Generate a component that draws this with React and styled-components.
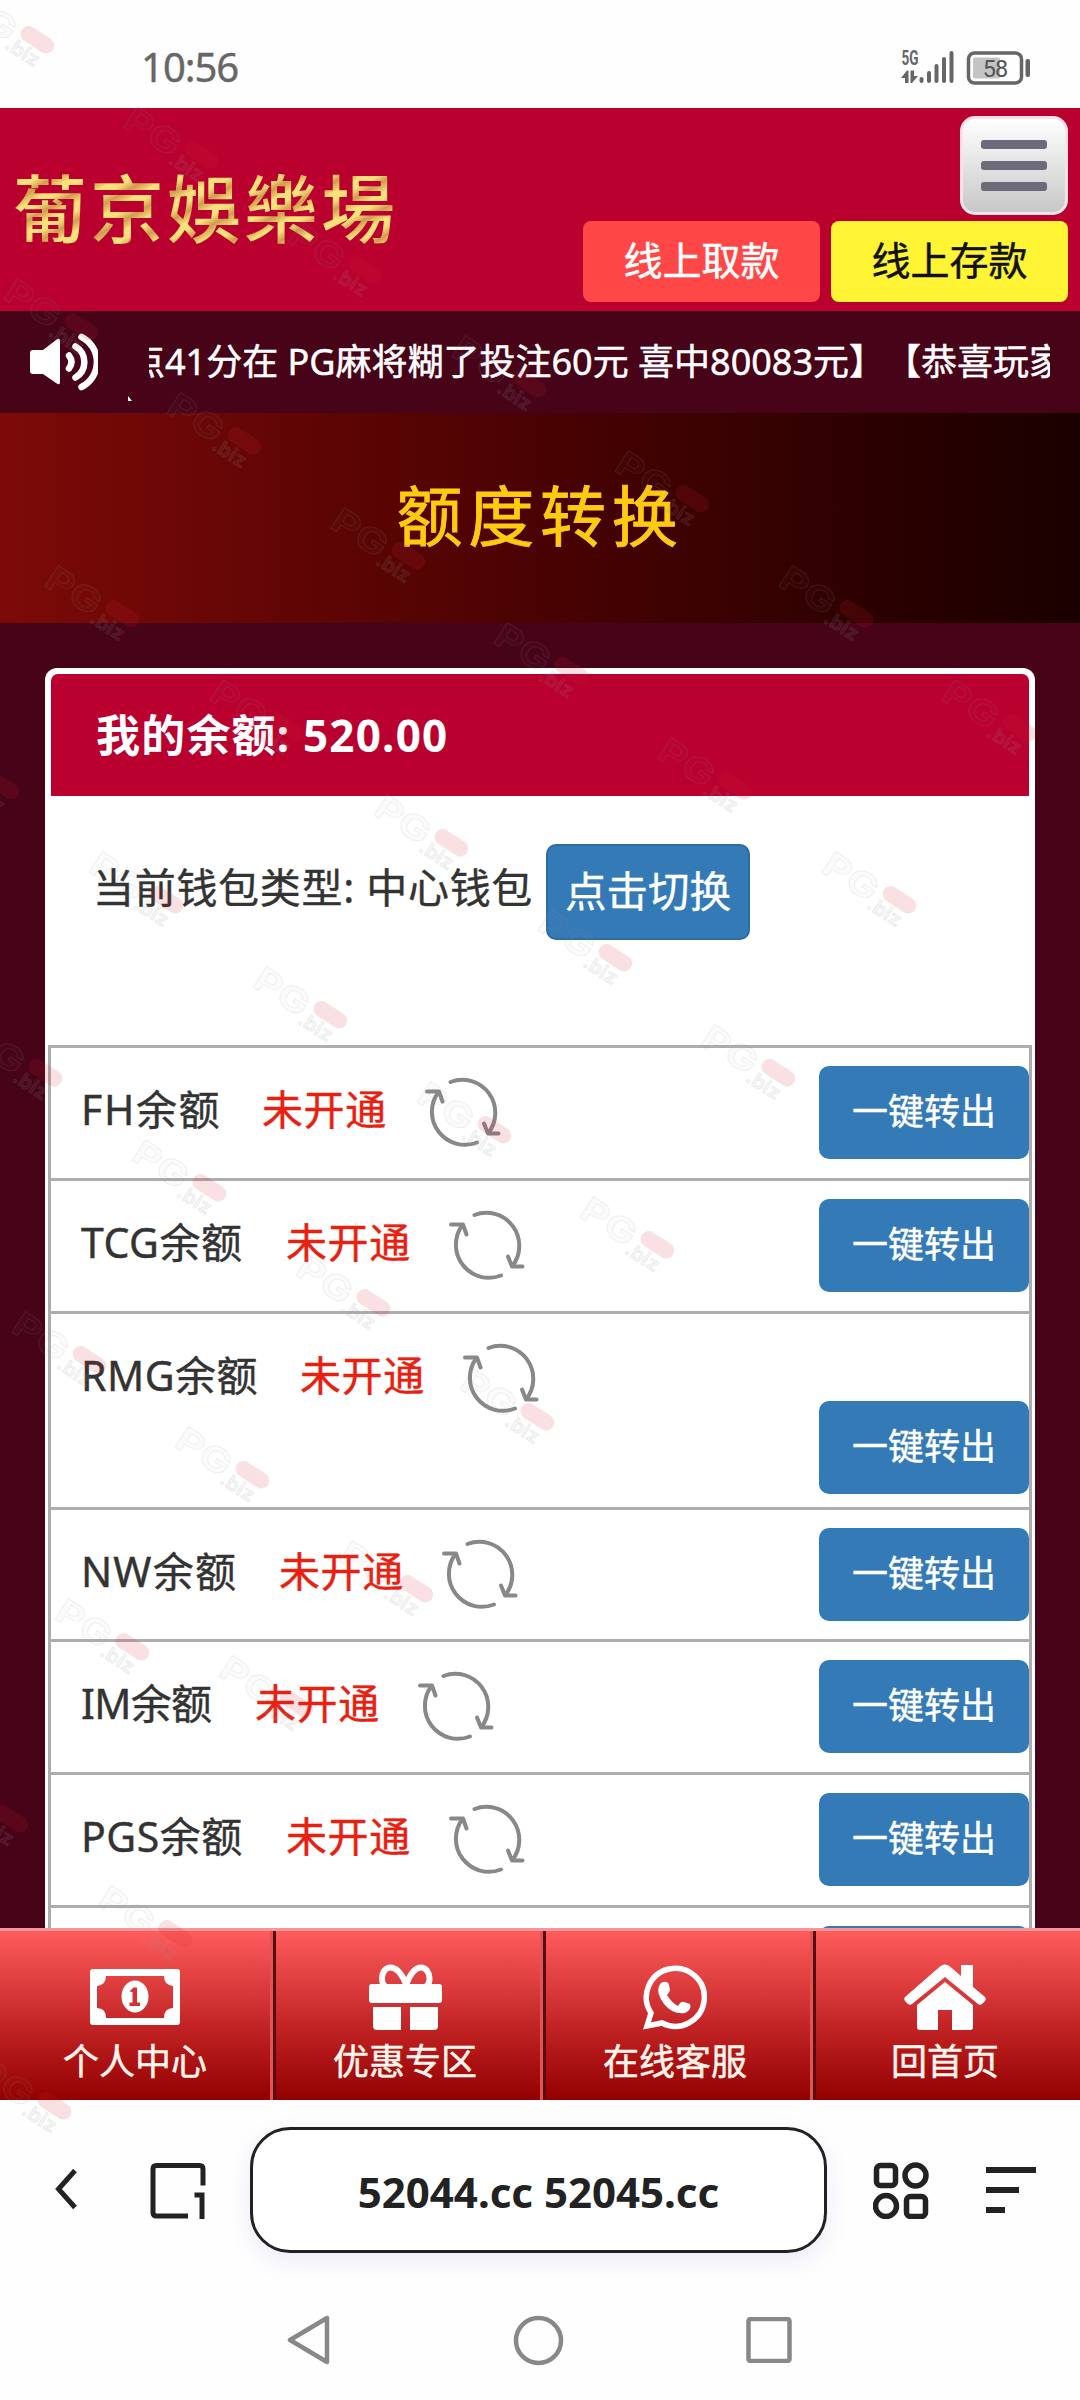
// App.jsx
import React from 'react';
import styled, { createGlobalStyle } from 'styled-components';

const COLORS = {
  brand: '#b9002f',
  dark: '#470318',
  blue: '#337ab7',
  line: '#adadad',
  ink: '#222',
};

const FONT = `'Noto Sans', 'Noto Sans CJK SC', sans-serif`;

const GlobalStyle = createGlobalStyle`
  body {
    margin: 0;
    background: #fefefe;
    font-family: ${FONT};
  }
  * { box-sizing: border-box; }
`;

const Screen = styled.div`
  position: relative;
  width: 1080px;
  height: 2400px;
  overflow: hidden;
  display: flex;
  flex-direction: column;
  background: #fefefe;
`;

const StatusBar = styled.div`
  height: 108px;
  padding: 26px 49px 0 141px;
  display: flex;
  justify-content: space-between;
  align-items: center;
  flex-shrink: 0;
`;

const Clock = styled.span`
  font-size: 40px;
  line-height: 50px;
  letter-spacing: -1px;
  color: #666;
  -webkit-text-stroke: 0.4px;
`;

const Header = styled.header`
  height: 203px;
  padding: 8px 12px 9px 13px;
  display: flex;
  justify-content: space-between;
  background: ${COLORS.brand};
  flex-shrink: 0;
`;

const Logo = styled.h1`
  margin: 39px 0 0;
  height: 100px;
  font-family: 'Noto Sans CJK TC', sans-serif;
  font-size: 74px;
  font-weight: 500;
  line-height: 100px;
  letter-spacing: 3px;
  white-space: nowrap;
  color: transparent;
  background: repeating-linear-gradient(150deg, #f8e07a 0 8px, #cf9c50 16px, #f3d470 24px);
  -webkit-background-clip: text;
  background-clip: text;
`;

const HeaderActions = styled.div`
  display: flex;
  flex-direction: column;
  align-items: flex-end;
  justify-content: space-between;
`;

const MenuButton = styled.button`
  width: 108px;
  height: 99px;
  padding: 0;
  border: 3px solid #f5e3e8;
  border-radius: 15px;
  background: linear-gradient(#fff, #c8c8c8);
  display: flex;
  flex-direction: column;
  align-items: center;
  justify-content: center;
  gap: 12px;
`;

const MenuLine = styled.span`
  width: 66px;
  height: 9px;
  border-radius: 3px;
  background: #6b6b7b;
`;

const PayRow = styled.div`
  display: flex;
  gap: 11px;
`;

const PayButton = styled.button`
  width: 237px;
  height: 81px;
  padding: 0 0 7px;
  border: 0;
  border-radius: 8px;
  font: 39px ${FONT};
  color: ${p => p.$color};
  background: ${p => p.$bg};
  -webkit-text-stroke: 0.5px;
`;

const Notice = styled.div`
  position: relative;
  height: 102px;
  padding: 0 30px;
  display: flex;
  align-items: center;
  background: ${COLORS.dark};
  flex-shrink: 0;
`;

const Marquee = styled.div`
  width: 901px;
  margin-left: 51px;
  overflow: hidden;
`;

const MarqueeText = styled.div`
  margin-left: -20px;
  font-size: 36px;
  line-height: 56px;
  white-space: pre;
  text-spacing-trim: space-all;
  color: #fff;
  -webkit-text-stroke: 0.5px;
`;

const MarqueeTail = styled.i`
  position: absolute;
  left: 128px;
  top: 85px;
  width: 4px;
  height: 5px;
  background: #fff;
  clip-path: polygon(0 0, 100% 100%, 0 100%);
`;

const Content = styled.main`
  height: 1515px;
  overflow: hidden;
  background: ${COLORS.dark};
  flex-shrink: 0;
`;

const Banner = styled.h2`
  margin: 0;
  height: 210px;
  display: flex;
  align-items: center;
  justify-content: center;
  padding-bottom: 13px;
  font-size: 66px;
  font-weight: 400;
  letter-spacing: 5.7px;
  color: #ffcb12;
  background: linear-gradient(90deg, #7c0a08, #4a0202 50%, #1a0000);
  -webkit-text-stroke: 0.8px;
`;

const Card = styled.section`
  margin: 45px 45px 0;
  border-radius: 12px 12px 0 0;
  background: #fff;
  padding: 6px 3px 0;
`;

const CardTitle = styled.div`
  margin: 0 3px;
  height: 122px;
  padding-left: 45px;
  border-radius: 7px 7px 0 0;
  font-size: 44px;
  font-weight: 700;
  line-height: 122px;
  letter-spacing: 1.2px;
  color: #fff;
  background: ${COLORS.brand};
`;

const WalletLine = styled.div`
  height: 249px;
  padding: 48px 0 0 45px;
  display: flex;
  align-items: flex-start;
  font-size: 41px;
  line-height: 87px;
  white-space: nowrap;
  color: #333;
  -webkit-text-stroke: 0.4px;
`;

const WalletType = styled.span`
  width: 453px;
  letter-spacing: 0.7px;
`;

const SwitchButton = styled.button`
  width: 204px;
  height: 96px;
  padding: 0 0 6px;
  border: 2px solid #2e6da4;
  border-radius: 10px;
  font: 41.5px ${FONT};
  color: #fff;
  background: ${COLORS.blue};
  -webkit-text-stroke: 0.4px;
`;

const Table = styled.div`
  border: solid ${COLORS.line};
  border-width: 0 3px;
`;

const Row = styled.div`
  height: ${p => p.$height}px;
  border-top: 3px solid ${COLORS.line};
  padding: 18px 0 ${p => (p.$wrapped ? 13 : 18)}px 30px;
  display: flex;
  justify-content: space-between;
  align-items: ${p => (p.$wrapped ? 'flex-end' : 'flex-start')};
`;

const Balance = styled.div`
  align-self: flex-start;
  display: flex;
  align-items: center;
  height: 93px;
  font-size: 41px;
  line-height: 60px;
  white-space: nowrap;
  color: #333;
  -webkit-text-stroke: 0.4px;
`;

const Platform = styled.span`
  width: ${p => p.$width}px;
  letter-spacing: ${p => p.$spacing || 0.5}px;
  padding-bottom: 8px;
`;

const State = styled.span`
  width: 162px;
  padding-bottom: 8px;
  letter-spacing: 0.6px;
  color: #e8200f;
`;

const TransferButton = styled.button`
  width: 210px;
  height: 93px;
  padding: 0 0 6px;
  border: 0;
  border-radius: 10px;
  font: 36px ${FONT};
  color: #fff;
  background: ${COLORS.blue};
  -webkit-text-stroke: 0.4px;
`;

const TabBar = styled.nav`
  height: 172px;
  display: grid;
  grid-template-columns: repeat(4, 1fr);
  border-top: 3px solid #f2979b;
  background: linear-gradient(#ff5c5c, #c02223 58%, #930000);
  flex-shrink: 0;
`;

const Tab = styled.a`
  display: flex;
  flex-direction: column;
  align-items: center;
  padding-top: 33px;
  font-size: 36px;
  line-height: 50px;
  color: #fff5ec;
  -webkit-text-stroke: 0.5px;
  & + & {
    box-shadow: inset 3px 0 #e25353, inset 6px 0 #5a0d10;
  }
  svg {
    display: block;
    margin-bottom: 7px;
  }
`;

const BrowserBar = styled.div`
  height: 180px;
  padding-left: 54px;
  display: flex;
  align-items: center;
  flex-shrink: 0;
`;

const AddressBox = styled.div`
  width: 577px;
  height: 126px;
  margin: 0 46px 0 44px;
  border: 3px solid ${COLORS.ink};
  border-radius: 40px;
  background: #fff;
  box-shadow: 0 8px 22px rgba(120, 120, 220, 0.14);
  font-size: 42px;
  font-weight: 700;
  line-height: 123px;
  text-align: center;
  white-space: nowrap;
  color: ${COLORS.ink};
`;

const SystemNav = styled.div`
  height: 120px;
  padding: 0 288px 0 286px;
  display: flex;
  align-items: center;
  justify-content: space-between;
`;

const StampLayer = styled.svg`
  position: absolute;
  inset: 0;
  pointer-events: none;
`;

const SignalIcon = () => (
  <svg width="130" height="34" viewBox="0 0 130 34" fill="#666" overflow="visible">
    <text x="0.500" y="15" fontSize="20" fontWeight="700" textLength="17" lengthAdjust="spacingAndGlyphs" fontFamily="Roboto">5G</text>
    <path d="M0 28l6-7.500h1.500V33H4v-5zM9.500 20.500H13V26h4l-6 7H9.500z" />
    <g stroke="#666" strokeWidth="4" strokeLinecap="round">
      <path d="M20.500 29v2M28 23v8M35.500 16v15M43 9v22M50.500 3v28" />
    </g>
    <rect x="67.500" y="3" width="53" height="30" rx="6" fill="none" stroke="#666" strokeWidth="3.500" />
    <rect x="72" y="7.500" width="27" height="21" rx="2" fill="#c4c4c4" />
    <text x="94" y="26.500" fontSize="23.500" textAnchor="middle" letterSpacing="-1" fontFamily="Roboto" fill="#555">58</text>
    <rect x="124.500" y="9" width="4.500" height="18" rx="2" />
  </svg>
);

const SpeakerIcon = () => (
  <svg width="68" height="58" viewBox="0 0 68 58" fill="#fff">
    <path d="M0 20q0-3 3-3h10L26 7q4-3 4 1v41q0 4-4 1L13 41H3q-3 0-3-3z" />
    <g fill="none" stroke="#fff" strokeWidth="6.500" strokeLinecap="round">
      <path d="M39 22.500q5 6.500 0 13M45.500 13.500a18 18 0 0 1 0 31M51.500 4a28 28 0 0 1 0 50" />
    </g>
  </svg>
);

const RefreshIcon = () => (
  <svg width="78" height="72" viewBox="0 0 78 72" fill="none" stroke="#888" strokeWidth="4" strokeLinecap="round" strokeLinejoin="round">
    <path d="M26.500 5A33 33 0 0 1 64 56.500M3 14.500h12l3.500 10M74.500 56.500H64l-4-10" />
    <path d="M14.500 15A33 33 0 0 0 53 65.500" />
  </svg>
);

const MoneyIcon = () => (
  <svg width="90" height="66" viewBox="0 0 90 66">
    <path fillRule="evenodd" fill="#fff" d="M3 5h84q3 0 3 3v50q0 3-3 3H3q-3 0-3-3V8q0-3 3-3zM16 12q0 9-9 10v22q9 0 9 10h58q0-10 9-10V22q-9-1-9-10z" />
    <ellipse cx="45" cy="32.500" rx="13.500" ry="16" fill="#fff" />
    <path d="M39.500 27.500l4-4H47v15h3V42H39.500v-3.500h3V28z" fill="#d23334" />
  </svg>
);

const GiftIcon = () => (
  <svg width="73" height="66" viewBox="0 0 73 66" fill="#fff">
    <path d="M37 20C32 8 27 3.500 21.500 3.500S13 9 13 14s1 6 3 8M37.500 20C42 8 47 3.500 52 3.500S60.500 9 60.500 14s-1 6-3 8" fill="none" stroke="#fff" strokeWidth="6" />
    <rect x="0" y="20" width="73" height="19" rx="3" />
    <path d="M4 43h28v23H8q-4 0-4-4zM41 43h28v19q0 4-4 4H41z" />
  </svg>
);

const ServiceIcon = () => (
  <svg width="64" height="66" viewBox="0 0 64 66">
    <path d="M8 49A29 29 0 1 1 19 59L4 62z" fill="none" stroke="#fff" strokeWidth="5.500" />
    <path d="M20 18q5-1 6 3l1 5q0 2-3 5 5 8 11 11 3-5 6-4l6 2q2 6-5 9-12 2-21-9-8-11-5-18 1-3 4-4z" fill="#fff" />
  </svg>
);

const HomeIcon = () => (
  <svg width="82" height="66" viewBox="0 0 82 66" fill="#fff">
    <path d="M36 2.500q5-4 10 0L57 12V1h12v22l12 10q1.500 2 0 4l-3 3q-2 1.500-4 0L41 13 8 40q-2 1.500-4 0l-3-3q-1.500-2 0-4z" />
    <path d="M41 18l28 23v22q0 3-3 3H48V46H34v20H16q-3 0-3-3V41z" />
  </svg>
);

const BackIcon = () => (
  <svg width="26" height="42" viewBox="0 0 26 42" fill="none" stroke={COLORS.ink} strokeWidth="5">
    <path d="M21 1.500L4.500 20 21 38.500" />
  </svg>
);

const PagesWrap = styled.svg`
  margin-left: 70px;
`;

const PagesIcon = () => (
  <PagesWrap width="56" height="57" viewBox="0 0 56 57" fill="none" stroke={COLORS.ink} strokeWidth="5">
    <path d="M53 23.500V7q0-3.500-3.500-3.500H6.500Q3 3.500 3 7v43.500Q3 54 6.500 54H38M44.500 33h7.500v24" />
  </PagesWrap>
);

const AppsIcon = () => (
  <svg width="57" height="57" viewBox="0 0 57 57" fill="none" stroke={COLORS.ink} strokeWidth="5.500">
    <rect x="3.500" y="3.500" width="19" height="20" rx="4" />
    <circle cx="42.500" cy="13.500" r="10.500" />
    <circle cx="13" cy="44" r="10.500" />
    <rect x="33.500" y="34.500" width="19" height="20" rx="4" />
  </svg>
);

const SortWrap = styled.svg`
  margin-left: 56px;
`;

const SortIcon = () => (
  <SortWrap width="51" height="46" viewBox="0 0 51 46" fill={COLORS.ink}>
    <path d="M0 0h50v6H0zM0 20h33v6H0zM0 40h19v6H0z" />
  </SortWrap>
);

const TABS = [
  { label: '个人中心', Icon: MoneyIcon },
  { label: '优惠专区', Icon: GiftIcon },
  { label: '在线客服', Icon: ServiceIcon },
  { label: '回首页', Icon: HomeIcon },
];

const ROWS = [
  { name: 'FH', height: 133, width: 181, spacing: 1.6 },
  { name: 'TCG', height: 133, width: 205 },
  { name: 'RMG', height: 196, width: 219, wrapped: true },
  { name: 'NW', height: 132, width: 198, spacing: 1.2 },
  { name: 'IM', height: 133, width: 174, spacing: -0.7 },
  { name: 'PGS', height: 133, width: 205 },
  { name: 'BBIN', height: 133, width: 205 },
];

// top-left corner of every stamp on the page
const STAMPS = [
  [-42, -11], [122, 104], [286, 219], [2, 276], [450, 333], [165, 390],
  [613, 448], [329, 505], [43, 563], [777, 563], [492, 620], [208, 677],
  [940, 677], [-77, 735], [656, 735], [372, 792], [87, 849], [820, 849],
  [536, 907], [251, 964], [-34, 1022], [699, 1022], [415, 1079],
  [130, 1137], [578, 1194], [294, 1252], [10, 1309], [458, 1366],
  [173, 1424], [337, 1538], [53, 1596], [217, 1653], [-68, 1768],
  [96, 1883], [-25, 2055],
];

const Stamps = () => (
  <StampLayer width="1080" height="2400">
    {STAMPS.map(([x, y]) => (
      <g key={`${x},${y}`} transform={`translate(${x + 14} ${y}) rotate(33)`}>
        <g fontFamily="Inter" fontWeight="700" fill="#999" fillOpacity="0.05" stroke="#999" strokeOpacity="0.14">
          <text x="0" y="26" fontSize="34" textLength="59" lengthAdjust="spacingAndGlyphs">PG</text>
          <text x="58" y="32" fontSize="20" fillOpacity="0.1" textLength="37" lengthAdjust="spacingAndGlyphs">.biz</text>
        </g>
        <rect x="64" y="-1" width="37" height="16" rx="8" fill="#d82030" fillOpacity="0.14" />
      </g>
    ))}
  </StampLayer>
);

const App = () => (
  <Screen>
    <GlobalStyle />
    <StatusBar>
      <Clock>10:56</Clock>
      <SignalIcon />
    </StatusBar>
    <Header>
      <Logo>葡京娛樂場</Logo>
      <HeaderActions>
        <MenuButton>
          <MenuLine />
          <MenuLine />
          <MenuLine />
        </MenuButton>
        <PayRow>
          <PayButton $bg="#ff4747" $color="#fff">线上取款</PayButton>
          <PayButton $bg="#fff535" $color="#111">线上存款</PayButton>
        </PayRow>
      </HeaderActions>
    </Header>
    <Notice>
      <SpeakerIcon />
      <Marquee>
        <MarqueeText>点41分在 PG麻将糊了投注60元 喜中80083元】【恭喜玩家</MarqueeText>
      </Marquee>
      <MarqueeTail />
    </Notice>
    <Content>
      <Banner>额度转换</Banner>
      <Card>
        <CardTitle>我的余额: 520.00</CardTitle>
        <WalletLine>
          <WalletType>当前钱包类型: 中心钱包</WalletType>
          <SwitchButton>点击切换</SwitchButton>
        </WalletLine>
        <Table>
          {ROWS.map(row => (
            <Row key={row.name} $height={row.height} $wrapped={row.wrapped}>
              <Balance>
                <Platform $width={row.width} $spacing={row.spacing}>{row.name}余额</Platform>
                <State>未开通</State>
                <RefreshIcon />
              </Balance>
              <TransferButton>一键转出</TransferButton>
            </Row>
          ))}
        </Table>
      </Card>
    </Content>
    <TabBar>
      {TABS.map(({ label, Icon }) => (
        <Tab key={label}>
          <Icon />
          {label}
        </Tab>
      ))}
    </TabBar>
    <BrowserBar>
      <BackIcon />
      <PagesIcon />
      <AddressBox>52044.cc 52045.cc</AddressBox>
      <AppsIcon />
      <SortIcon />
    </BrowserBar>
    <SystemNav>
      <svg width="44" height="50" viewBox="0 0 44 50" fill="none" stroke="#888" strokeWidth="4.500" strokeLinejoin="round">
        <path d="M41 3v44L4 25z" />
      </svg>
      <svg width="51" height="51" viewBox="0 0 51 51" fill="none" stroke="#888" strokeWidth="4.500">
        <circle cx="25.500" cy="25.500" r="22.500" />
      </svg>
      <svg width="46" height="46" viewBox="0 0 46 46" fill="none" stroke="#888" strokeWidth="4.500">
        <rect x="2.500" y="2" width="41" height="42" rx="2" />
      </svg>
    </SystemNav>
    <Stamps />
  </Screen>
);

export default App;
